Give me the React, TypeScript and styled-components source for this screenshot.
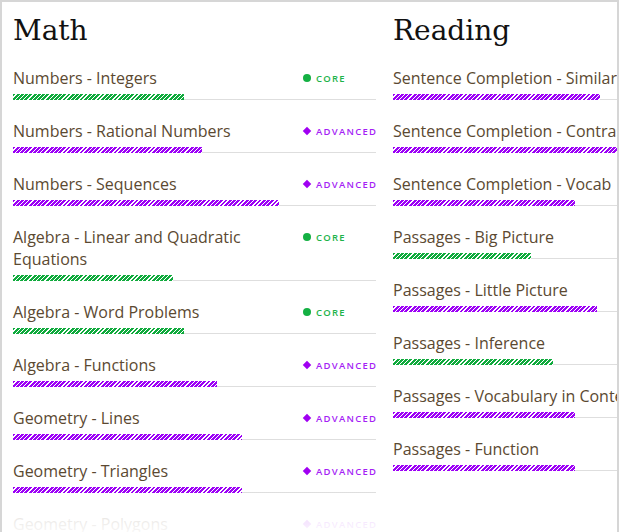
import React from 'react';
import styled, { createGlobalStyle } from 'styled-components';

const GlobalStyle = createGlobalStyle`
  body {
    margin: 0;
    background: #fff;
  }
`;

type Level = 'core' | 'advanced';

type Skill = {
  name: string;
  level: Level;
  progress: number;
};

const colors: Record<Level, string> = {
  core: '#0faa3c',
  advanced: '#9c00f6',
};

const Frame = styled.div`
  position: relative;
  box-sizing: border-box;
  width: 619px;
  height: 532px;
  border: 2px solid #d6d6d6;
  border-bottom: none;
  overflow: hidden;
`;

const Columns = styled.div`
  display: flex;
  gap: 17px;
  padding: 12px 0 0 11px;
`;

const Column = styled.section`
  flex: 0 0 363px;
  width: 363px;
`;

const Title = styled.h2`
  margin: 0;
  font-family: 'DejaVu Serif', serif;
  font-size: 28px;
  font-weight: normal;
  line-height: 33px;
  color: #111;
`;

const Row = styled.div`
  display: grid;
  grid-template-columns: 290px 73px;
  padding-top: 20px;
  border-bottom: 1px solid #dedede;
`;

const Name = styled.div`
  font-family: 'Open Sans', sans-serif;
  font-size: 16px;
  line-height: 22px;
  color: #5b4931;
`;

const Badge = styled.div<{ $level: Level }>`
  display: flex;
  align-items: center;
  gap: 5px;
  height: 22px;
  font-family: 'Open Sans', sans-serif;
  font-size: 9.5px;
  font-weight: 600;
  letter-spacing: 1.25px;
  text-transform: uppercase;
  white-space: nowrap;
  color: ${(props) => (props.$level === 'core' ? '#1db34a' : '#a51ff5')};
`;

const Dot = styled.span`
  width: 8px;
  height: 8px;
  border-radius: 50%;
  background: #14b043;
  flex-shrink: 0;
`;

const Diamond = styled.span`
  width: 6px;
  height: 6px;
  margin: 0 1px;
  transform: rotate(45deg);
  background: #a000f2;
  flex-shrink: 0;
`;

const Bar = styled.div<{ $level: Level }>`
  grid-column: 1 / -1;
  height: 6px;
  margin: 5px 0 -1px;
  background: repeating-linear-gradient(
    135deg,
    ${(props) => colors[props.$level]} 0,
    ${(props) => colors[props.$level]} 2px,
    #fff 2px,
    #fff 3px
  );
`;

const Fade = styled.div`
  position: absolute;
  left: 0;
  right: 0;
  bottom: 0;
  height: 40px;
  background: linear-gradient(
    to bottom,
    rgba(255, 255, 255, 0) 0%,
    rgba(255, 255, 255, 0.85) 50%,
    rgba(255, 255, 255, 0.95) 100%
  );
  pointer-events: none;
`;

const math: Skill[] = [
  { name: 'Numbers - Integers', level: 'core', progress: 171 },
  { name: 'Numbers - Rational Numbers', level: 'advanced', progress: 189 },
  { name: 'Numbers - Sequences', level: 'advanced', progress: 266 },
  { name: 'Algebra - Linear and Quadratic Equations', level: 'core', progress: 160 },
  { name: 'Algebra - Word Problems', level: 'core', progress: 171 },
  { name: 'Algebra - Functions', level: 'advanced', progress: 204 },
  { name: 'Geometry - Lines', level: 'advanced', progress: 229 },
  { name: 'Geometry - Triangles', level: 'advanced', progress: 229 },
  { name: 'Geometry - Polygons', level: 'advanced', progress: 200 },
];

const reading: Skill[] = [
  { name: 'Sentence Completion - Similar', level: 'advanced', progress: 207 },
  { name: 'Sentence Completion - Contrast', level: 'advanced', progress: 240 },
  { name: 'Sentence Completion - Vocab', level: 'advanced', progress: 182 },
  { name: 'Passages - Big Picture', level: 'core', progress: 138 },
  { name: 'Passages - Little Picture', level: 'advanced', progress: 204 },
  { name: 'Passages - Inference', level: 'core', progress: 160 },
  { name: 'Passages - Vocabulary in Context', level: 'advanced', progress: 182 },
  { name: 'Passages - Function', level: 'advanced', progress: 182 },
];

const SkillRow = ({ skill }: { skill: Skill }) => (
  <Row>
    <Name>{skill.name}</Name>
    <Badge $level={skill.level}>
      {skill.level === 'core' ? <Dot /> : <Diamond />}
      {skill.level}
    </Badge>
    <Bar $level={skill.level} style={{ width: skill.progress }} />
  </Row>
);

const App = () => (
  <>
    <GlobalStyle />
    <Frame>
      <Columns>
        <Column>
          <Title>Math</Title>
          {math.map((skill) => (
            <SkillRow key={skill.name} skill={skill} />
          ))}
        </Column>
        <Column>
          <Title>Reading</Title>
          {reading.map((skill) => (
            <SkillRow key={skill.name} skill={skill} />
          ))}
        </Column>
      </Columns>
      <Fade />
    </Frame>
  </>
);

export default App;
